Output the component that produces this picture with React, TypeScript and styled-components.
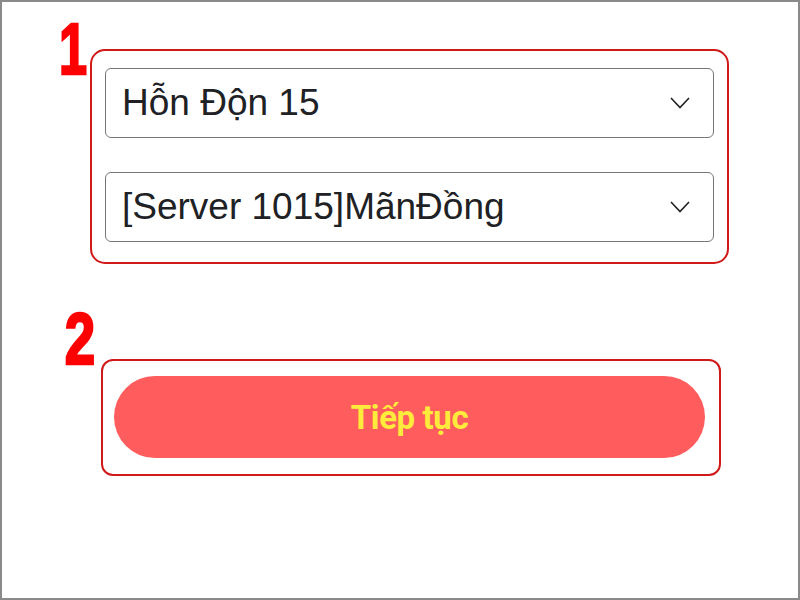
import React from "react";
import styled, { createGlobalStyle } from "styled-components";

const Global = createGlobalStyle`
  html, body { margin: 0; padding: 0; background: #ffffff; }
  * { box-sizing: border-box; }
`;

const Frame = styled.div`
  width: 800px;
  height: 600px;
  border: 2px solid #8a8a8a;
  background: #ffffff;
  display: flex;
  flex-direction: column;
  padding-top: 11px;
`;

const Step = styled.div<{ $indent: number; $gapTop: number }>`
  display: flex;
  align-items: flex-start;
  margin-left: ${(p) => p.$indent}px;
  margin-top: ${(p) => p.$gapTop}px;
`;

const StepNumber = styled.div<{ $width: number; $scale: number }>`
  width: ${(p) => p.$width}px;
  height: 74px;
  flex: none;
  display: flex;
  justify-content: center;
  font-family: "Liberation Sans", Arial, sans-serif;
  font-weight: 700;
  font-size: 72px;
  line-height: 72px;
  color: #ff0000;
  -webkit-text-stroke: 2.5px #ff0000;
  transform: scaleX(${(p) => p.$scale});
`;

const Outline = styled.div<{ $offset: number; $width: number; $radius: number }>`
  margin-top: ${(p) => p.$offset}px;
  width: ${(p) => p.$width}px;
  border: 2px solid #d01a1a;
  border-radius: ${(p) => p.$radius}px;
  display: flex;
  flex-direction: column;
`;

const SelectGroup = styled.div`
  padding: 17px 13px 20px 13px;
  display: flex;
  flex-direction: column;
  gap: 34px;
`;

const SelectBox = styled.div`
  height: 70px;
  border: 1px solid #767676;
  border-radius: 6px;
  display: flex;
  align-items: center;
  justify-content: space-between;
  padding: 0 23px 0 16px;
  font-family: "Liberation Sans", Arial, sans-serif;
  font-size: 37px;
  color: #202124;
  background: #ffffff;
`;

const ButtonWrap = styled.div`
  padding: 15px 14px 16px 11px;
`;

const ContinueButton = styled.button`
  width: 100%;
  height: 82px;
  border: none;
  border-radius: 41px;
  background: #ff5d5d;
  color: #ffeb3b;
  font-family: Roboto, "Liberation Sans", sans-serif;
  font-weight: 700;
  font-size: 33px;
  letter-spacing: -0.4px;
  display: flex;
  align-items: center;
  justify-content: center;
  padding: 0;
  cursor: pointer;
`;

const Chevron = () => (
  <svg width="20" height="12" viewBox="0 0 20 12" fill="none">
    <path d="M1 1 L10 10.5 L19 1" stroke="#222" strokeWidth="1.6" />
  </svg>
);

export default function App() {
  return (
    <>
      <Global />
      <Frame>
        <Step $indent={54} $gapTop={0}>
          <StepNumber $width={34} $scale={0.7}>1</StepNumber>
          <Outline $offset={36} $width={639} $radius={15}>
            <SelectGroup>
              <SelectBox>
                <span>Hỗn Độn 15</span>
                <Chevron />
              </SelectBox>
              <SelectBox>
                <span>[Server 1015]MãnĐồng</span>
                <Chevron />
              </SelectBox>
            </SelectGroup>
          </Outline>
        </Step>
        <Step $indent={57} $gapTop={39}>
          <StepNumber $width={42} $scale={0.76}>2</StepNumber>
          <Outline $offset={56} $width={620} $radius={12}>
            <ButtonWrap>
              <ContinueButton>Tiếp tục</ContinueButton>
            </ButtonWrap>
          </Outline>
        </Step>
      </Frame>
    </>
  );
}
